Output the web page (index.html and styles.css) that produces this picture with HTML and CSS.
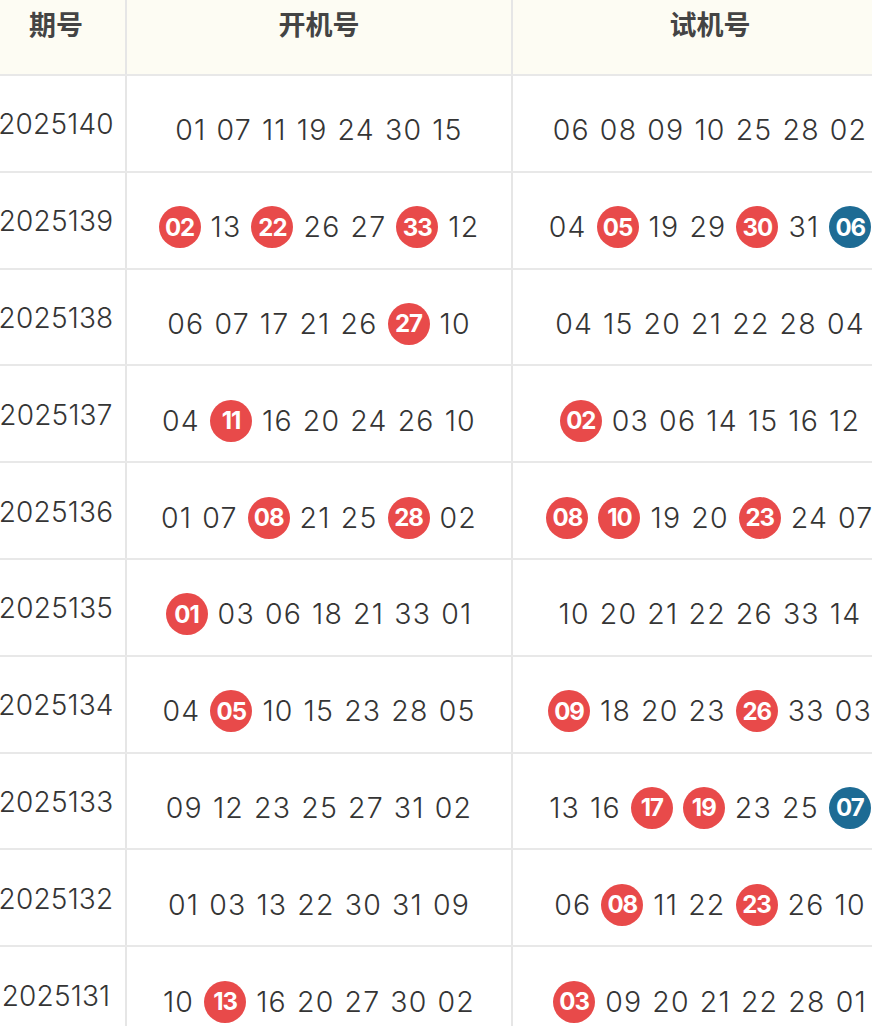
FILE: index.html
```html
<!DOCTYPE html>
<html lang="zh">
<head>
<meta charset="utf-8">
<title>开奖号码</title>
<link rel="stylesheet" href="styles.css">
</head>
<body>
<div class="table">
  <div class="row head">
    <div class="cell">期号</div>
    <div class="cell">开机号</div>
    <div class="cell">试机号</div>
  </div>

  <div class="row">
    <div class="cell period">2025140</div>
    <div class="cell nums"><span>01</span><span>07</span><span>11</span><span>19</span><span>24</span><span>30</span><span>15</span></div>
    <div class="cell nums"><span>06</span><span>08</span><span>09</span><span>10</span><span>25</span><span>28</span><span>02</span></div>
  </div>

  <div class="row">
    <div class="cell period">2025139</div>
    <div class="cell nums"><span class="ball red">02</span><span>13</span><span class="ball red">22</span><span>26</span><span>27</span><span class="ball red">33</span><span>12</span></div>
    <div class="cell nums"><span>04</span><span class="ball red">05</span><span>19</span><span>29</span><span class="ball red">30</span><span>31</span><span class="ball blue">06</span></div>
  </div>

  <div class="row">
    <div class="cell period">2025138</div>
    <div class="cell nums"><span>06</span><span>07</span><span>17</span><span>21</span><span>26</span><span class="ball red">27</span><span>10</span></div>
    <div class="cell nums"><span>04</span><span>15</span><span>20</span><span>21</span><span>22</span><span>28</span><span>04</span></div>
  </div>

  <div class="row">
    <div class="cell period">2025137</div>
    <div class="cell nums"><span>04</span><span class="ball red">11</span><span>16</span><span>20</span><span>24</span><span>26</span><span>10</span></div>
    <div class="cell nums"><span class="ball red">02</span><span>03</span><span>06</span><span>14</span><span>15</span><span>16</span><span>12</span></div>
  </div>

  <div class="row">
    <div class="cell period">2025136</div>
    <div class="cell nums"><span>01</span><span>07</span><span class="ball red">08</span><span>21</span><span>25</span><span class="ball red">28</span><span>02</span></div>
    <div class="cell nums"><span class="ball red">08</span><span class="ball red">10</span><span>19</span><span>20</span><span class="ball red">23</span><span>24</span><span>07</span></div>
  </div>

  <div class="row">
    <div class="cell period">2025135</div>
    <div class="cell nums"><span class="ball red">01</span><span>03</span><span>06</span><span>18</span><span>21</span><span>33</span><span>01</span></div>
    <div class="cell nums"><span>10</span><span>20</span><span>21</span><span>22</span><span>26</span><span>33</span><span>14</span></div>
  </div>

  <div class="row">
    <div class="cell period">2025134</div>
    <div class="cell nums"><span>04</span><span class="ball red">05</span><span>10</span><span>15</span><span>23</span><span>28</span><span>05</span></div>
    <div class="cell nums"><span class="ball red">09</span><span>18</span><span>20</span><span>23</span><span class="ball red">26</span><span>33</span><span>03</span></div>
  </div>

  <div class="row">
    <div class="cell period">2025133</div>
    <div class="cell nums"><span>09</span><span>12</span><span>23</span><span>25</span><span>27</span><span>31</span><span>02</span></div>
    <div class="cell nums"><span>13</span><span>16</span><span class="ball red">17</span><span class="ball red">19</span><span>23</span><span>25</span><span class="ball blue">07</span></div>
  </div>

  <div class="row">
    <div class="cell period">2025132</div>
    <div class="cell nums"><span>01</span><span>03</span><span>13</span><span>22</span><span>30</span><span>31</span><span>09</span></div>
    <div class="cell nums"><span>06</span><span class="ball red">08</span><span>11</span><span>22</span><span class="ball red">23</span><span>26</span><span>10</span></div>
  </div>

  <div class="row">
    <div class="cell period">2025131</div>
    <div class="cell nums"><span>10</span><span class="ball red">13</span><span>16</span><span>20</span><span>27</span><span>30</span><span>02</span></div>
    <div class="cell nums"><span class="ball red">03</span><span>09</span><span>20</span><span>21</span><span>22</span><span>28</span><span>01</span></div>
  </div>
</div>
</body>
</html>
```

FILE: styles.css
```css
html, body {
  margin: 0;
  padding: 0;
  background: #ffffff;
  overflow: hidden;
}

body {
  font-family: "Inter", "Noto Sans", "Noto Sans CJK SC", sans-serif;
  color: #353535;
  font-variant-numeric: proportional-nums;
}

.table {
  width: 920px;
  margin-left: -13px;
}

.row {
  display: grid;
  grid-template-columns: 140px 386px 394px;
  height: 96.8px;
  box-sizing: border-box;
  border-bottom: 2px solid #e8e8e8;
}

.row.head {
  height: 76px;
  background: #fdfcf3;
}

.cell {
  display: flex;
  align-items: center;
  justify-content: center;
  box-sizing: border-box;
}

.cell:not(:last-child) {
  border-right: 2px solid #e6e6e6;
}

.head .cell {
  align-items: flex-start;
  padding-top: 4px;
  font-family: "Noto Sans CJK SC", sans-serif;
  font-weight: 700;
  font-size: 27px;
  color: #444444;
}

.period {
  font-size: 28px;
  font-weight: 300;
  padding-top: 2px;
  letter-spacing: 0.2px;
}

.nums {
  gap: 10px;
  padding-top: 14px;
  font-size: 28.5px;
  font-weight: 300;
}

.nums > span:not(.ball) {
  line-height: 42px;
  letter-spacing: 1.2px;
}

.ball {
  width: 42px;
  height: 42px;
  border-radius: 50%;
  display: inline-flex;
  align-items: center;
  justify-content: center;
  color: #ffffff;
  font-weight: 700;
  font-size: 24px;
  letter-spacing: -1px;
}

.ball.red {
  background: #e84a4a;
}

.ball.blue {
  background: #1d6b94;
}
```
